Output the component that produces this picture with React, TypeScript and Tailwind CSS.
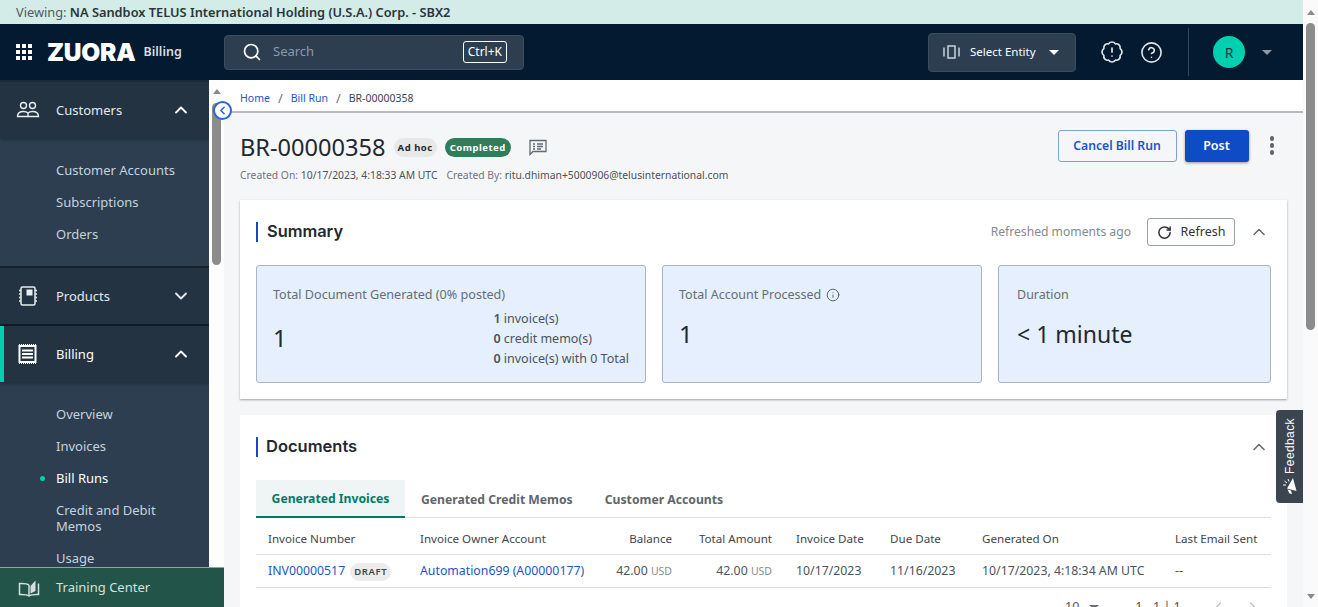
import React from "react";
import { BadgeAlert, ChevronDown, ChevronLeft, ChevronRight, ChevronUp, CircleHelp, Info, RotateCw, Search } from "lucide-react";

const Caret = ({ className = "" }: { className?: string }) => (
  <span className={`inline-block w-0 h-0 border-x-[5px] border-x-transparent border-t-[5px] ${className}`} />
);

const GridIcon = () => (
  <svg width="16" height="16" viewBox="0 0 16 16" fill="#fff">
    {[0, 6, 12].map((y) =>
      [0, 6, 12].map((x) => <rect key={`${x}-${y}`} x={x} y={y} width="4" height="4" />)
    )}
  </svg>
);

const CustomersIcon = () => (
  <svg width="24" height="24" viewBox="0 0 24 24" fill="none" stroke="#e8edf0" strokeWidth="1.4" className="-ml-[2px]">
    <circle cx="7.5" cy="7.5" r="3" />
    <circle cx="16.5" cy="7.5" r="3" />
    <path d="M1.5 18.5c0-3.5 2.500-5 6-5 2 0 3.500.5 4.500 1.500 1-1 2.500-1.500 4.500-1.500 3.500 0 6 1.500 6 5z" />
    <path d="M12 15v3.500" />
  </svg>
);

const ProductsIcon = () => (
  <svg width="20" height="22" viewBox="0 0 20 22" fill="none" stroke="#e8edf0" strokeWidth="1.5">
    <rect x="3" y="2" width="14" height="18" rx="1.500" />
    <rect x="8.500" y="4.500" width="6" height="6" fill="#e8edf0" stroke="none" />
    <path d="M1 5.500h2M1 9h2M1 12.500h2M1 16h2M17 5.500h2M17 9h2M17 12.500h2M17 16h2" />
  </svg>
);

const BillingIcon = () => (
  <svg width="20" height="20" viewBox="0 0 20 20" fill="none" stroke="#fff">
    <rect x="1.500" y="2" width="16" height="16" strokeWidth="2" />
    <path d="M4 6.500h11M4 10h11M4 13.500h11" strokeWidth="1.800" />
    <path d="M1 .5h18M1 19.500h18" strokeWidth="1" strokeDasharray="1 1" />
  </svg>
);

const BookIcon = () => (
  <svg width="24" height="20" viewBox="0 0 24 20" fill="none" stroke="#d5e0dc" strokeWidth="1.500">
    <path d="M12 7c-1.500-1.200-4-1.700-9.500-1.500v11c5.500-.2 8 .3 9.500 1.500 1.500-1.200 4-1.700 9.500-1.500v-11" />
    <path d="M12 7v11" />
    <path d="M13.500 8l5-5.500v10.500l-5 2.500z" fill="#d5e0dc" stroke="none" />
  </svg>
);

const EntityIcon = () => (
  <svg width="17" height="14" viewBox="0 0 17 14" fill="none" stroke="#c9d2d9" strokeWidth="1.500">
    <rect x="5" y="1" width="7" height="12" />
    <path d="M1 2.500v9M16 2.500v9" />
  </svg>
);

const CommentIcon = () => (
  <svg width="18" height="17" viewBox="0 0 18 17" fill="none" stroke="#5f6b76" strokeWidth="1.300">
    <path d="M1 1.500h16v11H4l-3 3z" />
    <path d="M4 5h2M8 5h6M4 7.500h2M8 7.500h6M4 10h2M8 10h4" />
  </svg>
);

const Megaphone = () => (
  <svg width="16" height="18" viewBox="0 0 16 18" fill="#fff">
    <path d="M11 1 14.500 14 5 11.500z" />
    <path d="M5.500 12.500 9 13.500 10 17 7.500 16.500z" />
    <path d="M6 2 7 4.500M2.500 4 5 6M1 8h3" stroke="#fff" strokeWidth="1" fill="none" />
  </svg>
);

const NavHead = ({
  icon,
  label,
  open,
  active,
}: {
  icon: React.ReactNode;
  label: string;
  open?: boolean;
  active?: boolean;
}) => (
  <div
    className={`relative z-10 h-[56px] shrink-0 flex items-center bg-[#233342] shadow-[0_2px_3px_rgba(0,0,0,0.25)] ${
      active ? "border-l-4 border-[#00cfb0] pl-[14px]" : "pl-[18px]"
    }`}>
    <span className="w-[38px] flex items-center">{icon}</span>
    <span className={`flex-1 pt-[2px] text-[13px] ${active ? "text-white" : "text-[#e3e9ee]"}`}>{label}</span>
    {open ? (
      <ChevronUp size={20} strokeWidth={2.200} className="text-white mr-[18px]" />
    ) : (
      <ChevronDown size={20} strokeWidth={2.200} className="text-[#e3e9ee] mr-[18px]" />
    )}
  </div>
);

const SubItem = ({ label, active }: { label: React.ReactNode; active?: boolean }) => (
  <div className={`relative pl-[56px] pr-2 py-[6px] text-[13px] leading-[16px] mb-[4px] ${active ? "text-white" : "text-[#c6d3de]"}`}>
    {active && <span className="absolute left-[40px] top-[12px] w-[5px] h-[5px] rounded-full bg-[#00cfb0]" />}
    {label}
  </div>
);

const Sidebar = () => (
  <aside className="w-[209px] shrink-0 bg-[#2c3e50] flex flex-col overflow-hidden">
    <div className="h-[2px] shrink-0 bg-[#1c2a36]" />
    <NavHead icon={<CustomersIcon />} label="Customers" open />
    <div className="h-[128px] shrink-0 pt-[18px]">
      <SubItem label="Customer Accounts" />
      <SubItem label="Subscriptions" />
      <SubItem label="Orders" />
    </div>
    <div className="h-[2px] shrink-0 bg-[#16212b]" />
    <NavHead icon={<ProductsIcon />} label="Products" />
    <div className="h-[2px] shrink-0 bg-[#16212b]" />
    <NavHead icon={<BillingIcon />} label="Billing" open active />
    <div className="pt-[18px]">
      <SubItem label="Overview" />
      <SubItem label="Invoices" />
      <SubItem label="Bill Runs" active />
      <SubItem label={<>Credit and Debit<br />Memos</>} />
      <SubItem label="Usage" />
    </div>
  </aside>
);

const TopHeader = () => (
  <header className="h-[56px] shrink-0 bg-[#031a30] flex items-center">
    <div className="w-[224px] pl-[16px] flex items-center">
      <GridIcon />
      <span className="ml-[15px] text-[24.500px] leading-none font-black tracking-[-0.2px] text-white font-['Inter',sans-serif]">ZUORA</span>
      <span className="ml-[8px] text-[12.500px] font-semibold text-[#d7dee4]">Billing</span>
    </div>
    <div className="w-[300px] h-[35px] rounded bg-[#2c3e50] border border-[#3b4c5c] flex items-center pl-[17px] pr-[16px]">
      <Search size={20} strokeWidth={2} className="text-white" />
      <span className="ml-[11px] flex-1 text-[13px] text-[#8e9aa5]">Search</span>
      <span className="h-[22px] px-[4px] rounded-[3px] border border-white text-[12px] leading-[20px] text-white">Ctrl+K</span>
    </div>
    <div className="ml-auto w-[148px] h-[39px] rounded bg-[#2c3e50] border border-[#3b4c5c] flex items-center pl-[14px]">
      <EntityIcon />
      <span className="ml-[10px] text-[11.500px] text-white">Select Entity</span>
      <Caret className="ml-[13px] border-t-white" />
    </div>
    <BadgeAlert size={24} strokeWidth={1.700} className="ml-[24px] text-[#dfe5e9]" />
    <CircleHelp size={23} strokeWidth={1.700} className="ml-[16px] text-[#dfe5e9]" />
    <div className="ml-[25px] h-[48px] w-px bg-[#33465a]" />
    <div className="ml-[24px] w-[32px] h-[32px] rounded-full bg-[#00cfb0] flex items-center justify-center text-[14px] text-[#0b3a3a]">R</div>
    <Caret className="ml-[17px] mr-[31px] border-t-[#8d99a5]" />
  </header>
);

const StatCard = ({ className, children }: { className: string; children: React.ReactNode }) => (
  <div className={`h-[118px] rounded-[3px] bg-[#e5effd] border border-[#aab4c4] ${className}`}>{children}</div>
);

const SectionTitle = ({ children, className = "" }: { children: React.ReactNode; className?: string }) => (
  <div className={`border-l-2 border-[#0f4bc4] h-[20px] flex items-center font-['Inter',sans-serif] font-semibold text-[#22282e] ${className}`}>
    <span className="-mt-[2px]">{children}</span>
  </div>
);

const Summary = () => (
  <section className="bg-white shadow-[0_1px_2px_rgba(0,0,0,0.35)] h-[199px] px-[16px] pt-[18px]">
    <div className="flex items-center h-[28px]">
      <SectionTitle className="pl-[9px] text-[16.400px]">Summary</SectionTitle>
      <span className="ml-auto text-[12.150px] text-[#84898e]">Refreshed moments ago</span>
      <button className="ml-[16px] w-[88px] h-[28px] rounded-[3px] border border-[#9a9fa5] flex items-center justify-center gap-[9px] text-[12.500px] text-[#2f3439]">
        <RotateCw size={15} strokeWidth={2.400} />
        Refresh
      </button>
      <ChevronUp size={20} strokeWidth={1.800} className="ml-[14px] mr-[2px] text-[#60676e]" />
    </div>
    <div className="flex gap-[16px] mt-[19px]">
      <StatCard className="w-[390px] pl-[16px] pr-[16px] pt-[20px]">
        <div className="text-[12.600px] leading-[18px] text-[#666d75]">Total Document Generated (0% posted)</div>
        <div className="flex">
          <div className="w-[222px] text-[24px] leading-[32px] text-[#22282e] pt-[18px]">1</div>
          <div className="ml-[1px] text-[12.500px] leading-[20px] text-[#4c535a] pt-[5px] whitespace-nowrap">
            <div><b className="font-semibold">1</b> invoice(s)</div>
            <div><b className="font-semibold">0</b> credit memo(s)</div>
            <div><b className="font-semibold">0</b> invoice(s) with 0 Total</div>
          </div>
        </div>
      </StatCard>
      <StatCard className="w-[320px] pl-[16px] pt-[20px]">
        <div className="flex items-center gap-[5px] text-[12.500px] leading-[18px] text-[#666d75]">
          Total Account Processed <Info size={14} strokeWidth={1.500} className="text-[#4c535a]" />
        </div>
        <div className="text-[24px] leading-[32px] text-[#22282e] mt-[14px]">1</div>
      </StatCard>
      <StatCard className="w-[273px] pl-[18px] pt-[20px]">
        <div className="text-[12.500px] leading-[18px] text-[#666d75]">Duration</div>
        <div className="text-[23px] leading-[32px] text-[#22282e] mt-[14px]">&lt; 1 minute</div>
      </StatCard>
    </div>
  </section>
);

const Documents = () => (
  <section className="bg-white mt-[16px] px-[16px] pt-[22px] h-[220px]">
    <div className="flex items-center justify-between h-[20px]">
      <SectionTitle className="pl-[8px] text-[16.500px]">Documents</SectionTitle>
      <ChevronUp size={20} strokeWidth={1.800} className="mr-[2px] text-[#60676e]" />
    </div>
    <div className="mt-[23px] flex h-[38px] border-b border-[#dcdfe2] text-[12.200px] font-bold">
      <div className="w-[149px] h-[38px] pt-[2px] bg-[#eff5f5] border-b-2 border-[#007a68] text-[#007a68] flex items-center justify-center">Generated Invoices</div>
      <div className="ml-[16px] h-[37px] pt-[3px] flex items-center text-[#5f666c]">Generated Credit Memos</div>
      <div className="ml-[32px] h-[37px] pt-[3px] flex items-center text-[#5f666c]">Customer Accounts</div>
    </div>
    <div className="grid grid-cols-[152px_180px_96px_100px_94px_92px_193px_108px] h-[37px] pt-[5px] items-center whitespace-nowrap border-b border-[#dcdfe2] text-[11.600px] text-[#3e454c] [&>div]:px-[12px]">
      <div>Invoice Number</div>
      <div>Invoice Owner Account</div>
      <div className="text-right">Balance</div>
      <div className="text-right">Total Amount</div>
      <div>Invoice Date</div>
      <div>Due Date</div>
      <div>Generated On</div>
      <div>Last Email Sent</div>
    </div>
    <div className="grid grid-cols-[152px_180px_96px_100px_94px_92px_193px_108px] h-[33px] pt-[1px] items-center border-b border-[#dcdfe2] text-[12.300px] text-[#4c535a] [&>div]:pl-[12px]">
      <div className="flex items-center whitespace-nowrap">
        <span className="text-[#1a56c9]">INV00000517</span>
        <span className="ml-[5px] h-[18px] px-[4px] rounded-full bg-[#ececec] text-[9.500px] leading-[18px] font-semibold tracking-[0.6px] text-[#3e454c]">DRAFT</span>
      </div>
      <div className="text-[#1a56c9] whitespace-nowrap">Automation699 (A00000177)</div>
      <div className="text-right pr-[12px] whitespace-nowrap">42.00 <span className="text-[10.500px] text-[#858b91]">USD</span></div>
      <div className="text-right pr-[12px] whitespace-nowrap">42.00 <span className="text-[10.500px] text-[#858b91]">USD</span></div>
      <div>10/17/2023</div>
      <div>11/16/2023</div>
      <div className="whitespace-nowrap">10/17/2023, 4:18:34 AM UTC</div>
      <div>--</div>
    </div>
    <div className="flex items-center h-[32px] pt-[7px] text-[12.500px] text-[#4c535a]">
      <span className="ml-[809px]">10</span>
      <Caret className="ml-[10px] border-t-[#6b7178]" />
      <span className="ml-[36px]">1 - 1 | 1</span>
      <ChevronLeft size={20} strokeWidth={1.500} className="ml-[27px] text-[#b9bdc1]" />
      <ChevronRight size={20} strokeWidth={1.500} className="ml-[15px] text-[#b9bdc1]" />
    </div>
  </section>
);

export default function App() {
  return (
    <div className="relative flex h-[607px] w-[1318px] overflow-hidden bg-white font-['Noto_Sans',sans-serif]">
      <div className="w-[1303px] shrink-0 flex flex-col">
        <div className="h-[24px] shrink-0 bg-[#d3ece8] pl-[16px] text-[12.800px] leading-[24px] text-[#4f5b62]">
          Viewing: <span className="font-semibold text-[#2a343b]">NA Sandbox TELUS International Holding (U.S.A.) Corp. - SBX2</span>
        </div>
        <TopHeader />
        <div className="flex flex-1 min-h-0">
          <Sidebar />
          <div className="w-[15px] shrink-0 bg-[#fdfdfd] pt-[9px] flex flex-col items-center">
            <span className="inline-block w-0 h-0 border-x-[4.500px] border-x-transparent border-b-[5px] border-b-[#8a8a8a]" />
            <div className="mt-[9px] w-[9px] h-[162px] rounded-full bg-[#8c8c8c]" />
          </div>
          <main className="flex-1 min-w-0 bg-[#f5f6f8]">
            <nav className="h-[33px] bg-white border-b-2 border-[#b6b9bd] pl-[16px] pt-[7px] flex items-center gap-[8px] text-[10.500px] text-[#3e454c]">
              <span className="text-[#1a56c9]">Home</span>
              <span className="text-[13px] text-[#6c7278]">/</span>
              <span className="text-[#1a56c9]">Bill Run</span>
              <span className="text-[13px] text-[#6c7278]">/</span>
              <span>BR-00000358</span>
            </nav>
            <div className="px-[16px]">
              <div className="h-[87px] flex justify-between">
                <div className="pt-[17px]">
                  <div className="flex items-center h-[34px]">
                    <h1 className="text-[23.600px] leading-[34px] text-[#22282e]">BR-00000358</h1>
                    <span className="ml-[8px] h-[19px] px-[4px] rounded-full bg-[#e8e8e8] text-[9.500px] leading-[19px] font-bold tracking-[0.5px] text-[#22282e]">Ad hoc</span>
                    <span className="ml-[8px] h-[19px] px-[5px] rounded-full bg-[#2f7d5b] text-[9.500px] leading-[19px] font-bold tracking-[0.5px] text-white">Completed</span>
                    <span className="ml-[18px]"><CommentIcon /></span>
                  </div>
                  <div className="mt-[3px] text-[10.350px] leading-[16px] text-[#70777e] whitespace-nowrap">
                    Created On: <span className="text-[#4c535a]">10/17/2023, 4:18:33 AM UTC</span>
                    <span className="ml-[9px]">Created By: </span>
                    <span className="text-[#4c535a]">ritu.dhiman+5000906@telusinternational.com</span>
                  </div>
                </div>
                <div className="pt-[17px] flex items-start">
                  <button className="w-[119px] h-[32px] rounded-[3px] border border-[#7fa0e0] text-[12.200px] font-semibold text-[#1a56c9]">Cancel Bill Run</button>
                  <button className="ml-[8px] w-[64px] h-[32px] rounded-[3px] bg-[#0f4bc4] shadow-[0_1px_3px_rgba(0,0,0,0.4)] text-[12.500px] font-semibold text-white">Post</button>
                  <div className="ml-[21px] mr-[13px] mt-[6px] flex flex-col gap-[2.500px]">
                    <span className="w-[4.500px] h-[4.500px] rounded-full bg-[#5f666c]" />
                    <span className="w-[4.500px] h-[4.500px] rounded-full bg-[#5f666c]" />
                    <span className="w-[4.500px] h-[4.500px] rounded-full bg-[#5f666c]" />
                  </div>
                </div>
              </div>
              <Summary />
              <Documents />
            </div>
          </main>
        </div>
      </div>
      <div className="w-[15px] shrink-0 bg-[#fafafa] flex flex-col items-center pt-[10px]">
        <span className="inline-block w-0 h-0 border-x-[4.500px] border-x-transparent border-b-[5px] border-b-[#8a8a8a]" />
        <div className="mt-[8px] w-[9px] h-[307px] rounded-full bg-[#8c8c8c]" />
        <span className="mt-auto mb-[8px] inline-block w-0 h-0 border-x-[4.500px] border-x-transparent border-t-[5px] border-t-[#8a8a8a]" />
      </div>

      {/* collapse toggle, sits on top of the inner scrollbar */}
      <div className="absolute left-[213px] top-[101px] w-[19px] h-[19px] rounded-full bg-white border-2 border-[#2f66d0] flex items-center justify-center">
        <ChevronLeft size={13} strokeWidth={3} className="text-[#2f66d0]" />
      </div>
      <div className="absolute left-0 bottom-0 w-[224px] h-[40px] bg-[#22544a] border-t border-[#8fa5a0] flex items-center pl-[17px] text-[13px] text-[#d5e0dc]">
        <BookIcon />
        <span className="ml-[15px]">Training Center</span>
      </div>
      <div className="absolute left-[1276px] top-[410px] w-[27px] h-[93px] rounded-l-[4px] bg-[#3a4550] flex flex-col items-center justify-end pb-[8px] gap-[3px]">
        <span className="[writing-mode:vertical-rl] rotate-180 font-['Liberation_Sans',sans-serif] text-[12px] tracking-[0.4px] text-white">Feedback</span>
        <Megaphone />
      </div>
    </div>
  );
}
